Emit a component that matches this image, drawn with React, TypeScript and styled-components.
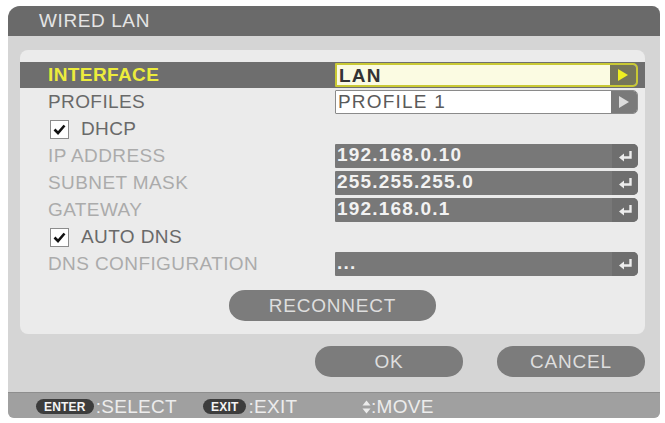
import React from "react";
import styled, { createGlobalStyle } from "styled-components";

const GlobalStyle = createGlobalStyle`
  html, body { margin: 0; background: #ffffff; }
  body { font-family: "Liberation Sans", Arial, sans-serif; }
`;

const Screen = styled.div`
  padding: 6px 5px 5px 8px;
`;

const Window = styled.div`
  width: 652px;
  background: #d5d5d5;
  border-radius: 12px 8px 6px 6px;
  overflow: hidden;
  display: flex;
  flex-direction: column;
`;

const TitleBar = styled.div`
  height: 30px;
  background: #6a6a6a;
  color: #e4e4e4;
  font-size: 19px;
  display: flex;
  align-items: center;
  padding-left: 31px;
  letter-spacing: 0.6px;
`;

const Body = styled.div`
  padding: 14px 15px 0 12px;
  display: flex;
  flex-direction: column;
`;

const Panel = styled.div`
  background: #ebebeb;
  border-radius: 8px;
  padding: 12px 0 13px;
  display: flex;
  flex-direction: column;
`;

const Row = styled.div<{ $active?: boolean }>`
  display: grid;
  grid-template-columns: 315px 303px;
  align-items: center;
  height: 26px;
  margin-bottom: 1px;
  background: ${(p) => (p.$active ? "#6e6e6e" : "transparent")};
`;

type Tone = "active" | "normal" | "disabled";

const labelColors: Record<Tone, string> = {
  active: "#ecec3c",
  normal: "#696969",
  disabled: "#ababab",
};

const Label = styled.div<{ $tone: Tone }>`
  padding-left: 28px;
  font-size: 19px;
  letter-spacing: 0.4px;
  color: ${(p) => labelColors[p.$tone]};
  font-weight: ${(p) => (p.$tone === "active" ? 700 : 400)};
  display: flex;
  align-items: center;
  gap: 12px;
  white-space: nowrap;
`;

const CheckLabel = styled(Label)`
  padding-left: 30px;
`;

const Box = styled.span`
  width: 17px;
  height: 17px;
  background: #ffffff;
  border: 1px solid #8c8c8c;
  display: inline-flex;
  align-items: center;
  justify-content: center;
`;

const Field = styled.div<{ $variant: "focus" | "light" | "dark" }>`
  height: 24px;
  display: flex;
  border-radius: 1px 5px 5px 1px;
  overflow: hidden;
  box-sizing: border-box;
  background: ${(p) =>
    p.$variant === "focus" ? "#fbfbe2" : p.$variant === "light" ? "#ffffff" : "#787878"};
  border: ${(p) =>
    p.$variant === "focus"
      ? "2px solid #c9c934"
      : p.$variant === "light"
      ? "1px solid #8a8a8a"
      : "none"};
`;

const FieldText = styled.div<{ $color: string; $bold?: boolean }>`
  flex: 1;
  padding-left: 2px;
  font-size: 19px;
  letter-spacing: 1.2px;
  line-height: 22px;
  color: ${(p) => p.$color};
  font-weight: ${(p) => (p.$bold ? 700 : 400)};
  white-space: nowrap;
  overflow: hidden;
`;

const FieldKey = styled.div<{ $bg: string }>`
  width: 26px;
  flex: none;
  background: ${(p) => p.$bg};
  display: flex;
  align-items: center;
  justify-content: center;
`;

const Center = styled.div`
  display: flex;
  justify-content: center;
  margin-top: 12px;
`;

const Pill = styled.button<{ $w: number }>`
  width: ${(p) => p.$w}px;
  height: 31px;
  border: none;
  border-radius: 16px / 15px;
  background: #7c7c7c;
  color: #dedede;
  font-family: "Liberation Sans", Arial, sans-serif;
  font-size: 19px;
  letter-spacing: 0.8px;
  padding: 0;
  display: flex;
  align-items: center;
  justify-content: center;
`;

const Actions = styled.div`
  display: flex;
  justify-content: flex-end;
  gap: 34px;
  padding: 12px 0 0;
  margin-bottom: 15px;
`;

const HelpBar = styled.div`
  height: 26px;
  background: #a0a0a0;
  border-top: 1px solid #8e8e8e;
  box-sizing: border-box;
  display: flex;
  align-items: center;
  padding: 2px 0 0 28px;
  color: #ececec;
  font-size: 19px;
  letter-spacing: 0.3px;
`;

const HelpItem = styled.div<{ $w: number }>`
  width: ${(p) => p.$w}px;
  display: flex;
  align-items: center;
`;

const KeyCap = styled.span`
  height: 15px;
  padding: 0 8px;
  border-radius: 8px;
  background: #3c3c3c;
  color: #f4f4f4;
  font-size: 12px;
  font-weight: 700;
  letter-spacing: 0.2px;
  display: inline-flex;
  align-items: center;
  margin-right: 2px;
`;

const Tick = () => (
  <svg width="13" height="11" viewBox="0 0 13 11">
    <path d="M1.5 5.5 L5 9 L11.5 1.5" fill="none" stroke="#111" strokeWidth="2.6" />
  </svg>
);

const Play = ({ color }: { color: string }) => (
  <svg width="12" height="14" viewBox="0 0 12 14">
    <path d="M1 1 L11 7 L1 13 Z" fill={color} />
  </svg>
);

const Enter = () => (
  <svg width="15" height="12" viewBox="0 0 15 12">
    <path d="M12.5 1 V7.5 H5" fill="none" stroke="#ededed" strokeWidth="2.4" />
    <path d="M1 7.5 L6 3.5 V11.5 Z" fill="#ededed" />
  </svg>
);

const UpDown = () => (
  <svg width="9" height="14" viewBox="0 0 9 14">
    <path d="M4.5 0.5 L8.5 5.5 H0.5 Z" fill="#ececec" />
    <path d="M4.5 13.5 L8.5 8.5 H0.5 Z" fill="#ececec" />
  </svg>
);

const addressRows = [
  { label: "IP ADDRESS", value: "192.168.0.10" },
  { label: "SUBNET MASK", value: "255.255.255.0" },
  { label: "GATEWAY", value: "192.168.0.1" },
];

const InputField = ({ value }: { value: string }) => (
  <Field $variant="dark">
    <FieldText $color="#f2f2f2" $bold>
      {value}
    </FieldText>
    <FieldKey $bg="#6e6e6e">
      <Enter />
    </FieldKey>
  </Field>
);

export default function App() {
  return (
    <>
      <GlobalStyle />
      <Screen>
        <Window>
          <TitleBar>WIRED LAN</TitleBar>
          <Body>
            <Panel>
              <Row $active>
                <Label $tone="active">INTERFACE</Label>
                <Field $variant="focus">
                  <FieldText $color="#333" $bold>
                    LAN
                  </FieldText>
                  <FieldKey $bg="#76765a">
                    <Play color="#eeee22" />
                  </FieldKey>
                </Field>
              </Row>
              <Row>
                <Label $tone="normal">PROFILES</Label>
                <Field $variant="light">
                  <FieldText $color="#5a5a5a">PROFILE 1</FieldText>
                  <FieldKey $bg="#7a7a7a">
                    <Play color="#dcdcdc" />
                  </FieldKey>
                </Field>
              </Row>
              <Row>
                <CheckLabel $tone="normal">
                  <Box>
                    <Tick />
                  </Box>
                  DHCP
                </CheckLabel>
              </Row>
              {addressRows.map((r) => (
                <Row key={r.label}>
                  <Label $tone="disabled">{r.label}</Label>
                  <InputField value={r.value} />
                </Row>
              ))}
              <Row>
                <CheckLabel $tone="normal">
                  <Box>
                    <Tick />
                  </Box>
                  AUTO DNS
                </CheckLabel>
              </Row>
              <Row>
                <Label $tone="disabled">DNS CONFIGURATION</Label>
                <InputField value="..." />
              </Row>
              <Center>
                <Pill $w={207}>RECONNECT</Pill>
              </Center>
            </Panel>
            <Actions>
              <Pill $w={148}>OK</Pill>
              <Pill $w={148}>CANCEL</Pill>
            </Actions>
          </Body>
          <HelpBar>
            <HelpItem $w={167}>
              <KeyCap>ENTER</KeyCap>:SELECT
            </HelpItem>
            <HelpItem $w={159}>
              <KeyCap>EXIT</KeyCap>:EXIT
            </HelpItem>
            <HelpItem $w={100}>
              <UpDown />:MOVE
            </HelpItem>
          </HelpBar>
        </Window>
      </Screen>
    </>
  );
}
